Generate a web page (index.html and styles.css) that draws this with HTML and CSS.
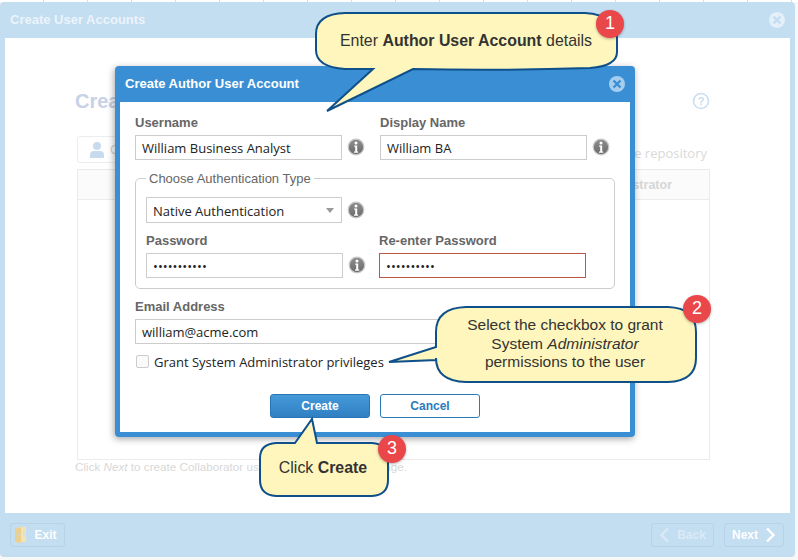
FILE: index.html
```html
<!DOCTYPE html>
<html lang="en">
<head>
<meta charset="utf-8">
<title>Create User Accounts</title>
<link rel="stylesheet" href="styles.css">
</head>
<body>
<div class="top-rule"></div>
<div class="wizard">
  <header class="wizard-head">
    <span class="wizard-title">Create User Accounts</span>
    <svg class="close-icon" width="18" height="18" viewBox="0 0 18 18"><circle cx="9" cy="9" r="8" fill="#e3eff9"/><path d="M5.5 5.5l7 7M12.5 5.5l-7 7" stroke="#c3ddf1" stroke-width="2.4"/></svg>
  </header>
  <main class="wizard-body">
    <div class="page-title-row">
      <h1 class="page-title">Create User Accounts</h1>
      <svg width="18" height="18" viewBox="0 0 18 18"><circle cx="9" cy="9" r="7.5" fill="none" stroke="#c9def0" stroke-width="1.6"/><text x="9" y="13.2" text-anchor="middle" class="help-mark">?</text></svg>
    </div>
    <div class="toolbar">
      <div class="search">
        <svg width="16" height="18" viewBox="0 0 16 18"><circle cx="8" cy="5" r="4" fill="#c8daee"/><path d="M1 17v-3q0-4 4-4h6q4 0 4 4v3z" fill="#c8daee"/></svg>
        <span>Create</span>
      </div>
      <span class="toolbar-note">the repository</span>
    </div>
    <div class="table">
      <div class="table-head"><span>Administrator</span></div>
    </div>
    <p class="hint"><span>Click <i>Next</i> to create Collaborator users</span><span>page.</span></p>
  </main>
  <footer class="wizard-foot">
    <button class="foot-btn exit">
      <svg width="14" height="18" viewBox="0 0 14 18"><path d="M1 3l4-2h7v15H5l-4 1z" fill="#f3e3b4"/><path d="M1 3l6-2v16l-6-1z" fill="#e9d091"/><circle cx="5" cy="9" r=".9" fill="#c3ddf1"/><path d="M10 5v5" stroke="#c3ddf1"/></svg>
      Exit
    </button>
    <span class="foot-gap"></span>
    <button class="foot-btn back">
      <svg width="11" height="16" viewBox="0 0 11 16"><path d="M9 1.5L2.5 8 9 14.5" fill="none" stroke="#d9e9f6" stroke-width="2.4"/></svg>
      Back
    </button>
    <button class="foot-btn next">
      Next
      <svg width="11" height="16" viewBox="0 0 11 16"><path d="M2 1.5L8.500 8 2 14.500" fill="none" stroke="#fff" stroke-width="2.4"/></svg>
    </button>
  </footer>
</div>

<section class="modal">
  <header class="modal-head">
    <span class="modal-title">Create Author User Account</span>
    <svg width="18" height="18" viewBox="0 0 18 18"><circle cx="9" cy="9" r="8" fill="#a5cdee"/><path d="M5.500 5.500l7 7M12.500 5.500l-7 7" stroke="#3a8fd4" stroke-width="2.4"/></svg>
  </header>
  <form class="modal-body">
    <div class="row">
      <div class="field">
        <label class="label">Username</label>
        <div class="control">
          <input class="input w-207" type="text" value="William Business Analyst">
          <svg class="info" width="18" height="18" viewBox="0 0 18 18"><use href="#info-icon"/></svg>
        </div>
      </div>
      <div class="field">
        <label class="label">Display Name</label>
        <div class="control">
          <input class="input w-207" type="text" value="William BA">
          <svg class="info" width="18" height="18" viewBox="0 0 18 18"><use href="#info-icon"/></svg>
        </div>
      </div>
    </div>
    <fieldset class="auth">
      <legend class="auth-legend">Choose Authentication Type</legend>
      <div class="control">
        <div class="select">Native Authentication<span class="caret"></span></div>
        <svg class="info" width="18" height="18" viewBox="0 0 18 18"><use href="#info-icon"/></svg>
      </div>
      <div class="row auth-row">
        <div class="field">
          <label class="label">Password</label>
          <div class="control">
            <input class="input w-197" type="password" value="xxxxxxxxxxx">
            <svg class="info" width="18" height="18" viewBox="0 0 18 18"><use href="#info-icon"/></svg>
          </div>
        </div>
        <div class="field">
          <label class="label">Re-enter Password</label>
          <input class="input w-207 invalid" type="password" value="xxxxxxxxxx">
        </div>
      </div>
    </fieldset>
    <div class="field email">
      <label class="label">Email Address</label>
      <input class="input w-480" type="text" value="william@acme.com">
    </div>
    <label class="check"><span class="box"></span>Grant System Administrator privileges</label>
    <div class="actions">
      <button type="button" class="btn primary">Create</button>
      <button type="button" class="btn ghost">Cancel</button>
    </div>
  </form>
</section>

<svg class="sprites" width="0" height="0">
  <defs>
    <linearGradient id="info-fill" x1="0" y1="0" x2="0" y2="1"><stop offset="0" stop-color="#8f8f8f"/><stop offset="1" stop-color="#6a6a6a"/></linearGradient>
    <g id="info-icon">
      <circle cx="9" cy="9" r="7.800" fill="url(#info-fill)" stroke="#c9c9c9" stroke-width="1.200"/>
      <circle cx="9" cy="5" r="1.500" fill="#fff"/>
      <path d="M7.200 7.500h3v6h1v1.300H7v-1.300h1.200V8.800h-1z" fill="#fff"/>
    </g>
  </defs>
</svg>

<svg class="callouts" width="798" height="560" viewBox="0 0 798 560">
  <path class="bubble" d="M345 13H585Q617 15 617 38V52Q617 66 590 68Q500 71 413 69L327 111L373 69H345Q316 67 316 50V34Q316 14 345 13Z"/>
  <path class="bubble" d="M466 307H668Q696 308 696 332V358Q696 381 668 382H466Q436 381 436 358V360L389 362L436 347V332Q436 308 466 307Z"/>
  <path class="bubble" d="M295 443L312 419L317 443H372Q388 444 388 458V480Q388 495 372 496H276Q260 495 260 480V458Q260 444 276 443Z"/>
</svg>
<div class="note note-1">Enter <b>Author User Account</b> details</div>
<div class="note note-2">Select the checkbox to grant<br>System <i>Administrator</i><br>permissions to the user</div>
<div class="note note-3">Click <b>Create</b></div>
<span class="badge badge-1">1</span>
<span class="badge badge-2">2</span>
<span class="badge badge-3">3</span>
</body>
</html>
```
FILE: styles.css
```css
* { box-sizing: border-box; }
html, body { margin: 0; padding: 0; }
body {
  width: 798px;
  height: 560px;
  overflow: hidden;
  position: relative;
  background: #f8f8f8;
  font-family: "Liberation Sans", Arial, sans-serif;
}
.top-rule {
  height: 2px;
  background: repeating-linear-gradient(90deg, #fff 0, #fff 43px, #dcdcdc 43px, #dcdcdc 44px);
}

/* Dimmed wizard behind the dialog */
.wizard {
  width: 795px;
  height: 555px;
  display: flex;
  flex-direction: column;
  background: #c3ddf1;
  border-radius: 4px;
  padding: 0 5px;
}
.wizard-head {
  height: 36px;
  flex: none;
  display: flex;
  align-items: center;
  justify-content: space-between;
  padding: 0 4px 1px 5px;
}
.wizard-title { color: #ecf4fb; font-weight: bold; font-size: 13px; }
.close-icon { margin-top: 1px; }
.wizard-body {
  flex: 1;
  background: #fff;
  padding: 51px 80px 0 72px;
}
.page-title-row {
  display: flex;
  align-items: center;
  justify-content: space-between;
  height: 24px;
}
.page-title { margin: 0 0 0 -2px; font-size: 20px; font-weight: bold; color: #c6d2e6; }
.toolbar {
  margin-top: 23px;
  display: flex;
  justify-content: space-between;
  align-items: center;
  height: 27px;
}
.search {
  display: flex;
  align-items: center;
  gap: 5px;
  width: 120px;
  height: 27px;
  padding-left: 11px;
  border: 1px solid #ededed;
  border-radius: 3px;
  color: #d0d0d0;
  font-size: 13px;
}
.toolbar-note {
  margin: 6px 3px 0 0;
  color: #d9d9d9;
  font-family: "Open Sans", sans-serif;
  font-size: 13px;
}
.table {
  margin-top: 6px;
  height: 291px;
  width: 633px;
  border: 1px solid #ebebeb;
}
.table-head {
  height: 30px;
  background: #fbfbfb;
  border-bottom: 1px solid #ebebeb;
  display: flex;
  align-items: center;
  justify-content: flex-end;
  padding-right: 37px;
  color: #d6d6d6;
  font-size: 12.500px;
  font-weight: bold;
}
.hint {
  margin: 0 0 0 -2px;
  width: 332px;
  display: flex;
  justify-content: space-between;
  color: #d8d8d8;
  font-size: 11.700px;
  height: 14px;
}
.wizard-foot {
  height: 44px;
  flex: none;
  display: flex;
  align-items: center;
  gap: 10px;
  padding: 0 6px 0 5px;
}
.foot-gap { flex: 1; }
.foot-btn {
  height: 24px;
  display: flex;
  align-items: center;
  justify-content: center;
  gap: 7px;
  background: #c3ddf1;
  border: 1px solid #b7d3ea;
  border-radius: 3px;
  color: #fff;
  font: bold 12px "Liberation Sans", Arial, sans-serif;
  padding: 0;
}
.exit { width: 55px; padding-right: 4px; gap: 6px; }
.back { width: 63px; color: #dbeaf6; }
.next { width: 60px; }

/* Dialog */
.modal {
  position: absolute;
  left: 115px;
  top: 66px;
  width: 520px;
  height: 371px;
  background: #3a8fd4;
  border-radius: 4px;
  box-shadow: -1px 2px 7px rgba(0, 0, 0, .35);
  padding: 0 5px 5px;
  display: flex;
  flex-direction: column;
}
.modal-head {
  height: 36px;
  flex: none;
  display: flex;
  align-items: center;
  justify-content: space-between;
  padding: 0 4px 1px 5px;
}
.modal-title { color: #fff; font-weight: bold; font-size: 13px; }
.modal-body {
  flex: 1;
  background: #fff;
  padding: 13px 15px 0;
}
.row { display: flex; }
.row > .field:first-child { width: 245px; }
.label {
  display: block;
  height: 20px;
  color: #666;
  font-size: 13px;
  font-weight: bold;
  line-height: 16px;
}
.control { display: flex; align-items: center; gap: 5px; }
.control .info { margin-top: -1px; }
.input {
  display: block;
  height: 25px;
  border: 1px solid #ccc;
  background: #fff;
  padding: 0 6px;
  font: 13px "Open Sans", sans-serif;
  color: #222;
  outline: none;
}
.w-207 { width: 207px; }
.w-197 { width: 197px; }
.w-480 { width: 480px; }
.invalid { border-color: #b85a45; }
.info { flex: none; }
.auth {
  margin: 11px 0 0;
  padding: 11px 10px 0;
  height: 118px;
  width: 480px;
  border: 1px solid #ccc;
  border-radius: 5px;
  min-width: 0;
}
.auth-legend {
  margin-left: 0;
  padding: 0 3px;
  color: #666;
  font-size: 13px;
  line-height: 15px;
}
.select {
  position: relative;
  width: 196px;
  height: 26px;
  border: 1px solid #ccc;
  padding-left: 6px;
  font: 13px/26px "Open Sans", sans-serif;
  color: #222;
}
.caret {
  position: absolute;
  right: 7px;
  top: 10px;
  width: 0;
  height: 0;
  border: 4px solid transparent;
  border-top: 5px solid #999;
  border-bottom: 0;
}
.auth-row { margin-top: 10px; }
.auth-row > .field:first-child { width: 233px; }
.email { margin-top: 10px; }
.check {
  display: flex;
  align-items: center;
  gap: 5px;
  margin: 10px 0 0 1px;
  font: 13px "Open Sans", sans-serif;
  color: #222;
  height: 15px;
}
.box {
  width: 13px;
  height: 13px;
  border: 1px solid #ccc;
  border-radius: 2px;
  background: #fafafa;
}
.actions {
  margin-top: 25px;
  display: flex;
  justify-content: center;
  gap: 10px;
}
.btn {
  width: 100px;
  height: 24px;
  border-radius: 3px;
  font: bold 12px "Liberation Sans", Arial, sans-serif;
  padding: 0;
}
.primary {
  background: linear-gradient(#469ad9, #2f80c3);
  border: 1px solid #2a76b5;
  color: #fff;
}
.ghost {
  background: #fff;
  border: 1px solid #2a7ab8;
  color: #2b7cbd;
}
.sprites { position: absolute; }

/* Annotations laid over the screenshot */
.callouts { position: absolute; left: 0; top: 0; pointer-events: none; }
.bubble { fill: #fef6bc; stroke: #0f4f8a; stroke-width: 2; }
.note {
  position: absolute;
  color: #333;
  font-size: 15.900px;
  text-align: center;
  line-height: 18.500px;
}
.note-1 { left: 316px; top: 32px; width: 300px; }
.note-2 { left: 436px; top: 316px; width: 258px; font-size: 15.500px; }
.note-3 { left: 259px; top: 459px; width: 128px; }
.badge {
  position: absolute;
  width: 28px;
  height: 28px;
  border-radius: 50%;
  background: #e9474a;
  color: #fff;
  font-size: 18px;
  line-height: 26px;
  text-align: center;
  box-shadow: 0 1px 3px rgba(0, 0, 0, .3);
}
.badge-1 { left: 596px; top: 10px; }
.badge-2 { left: 683px; top: 295px; }
.badge-3 { left: 378px; top: 435px; }
.help-mark { font: bold 11px "Liberation Sans", sans-serif; fill: #c9def0; }
```
